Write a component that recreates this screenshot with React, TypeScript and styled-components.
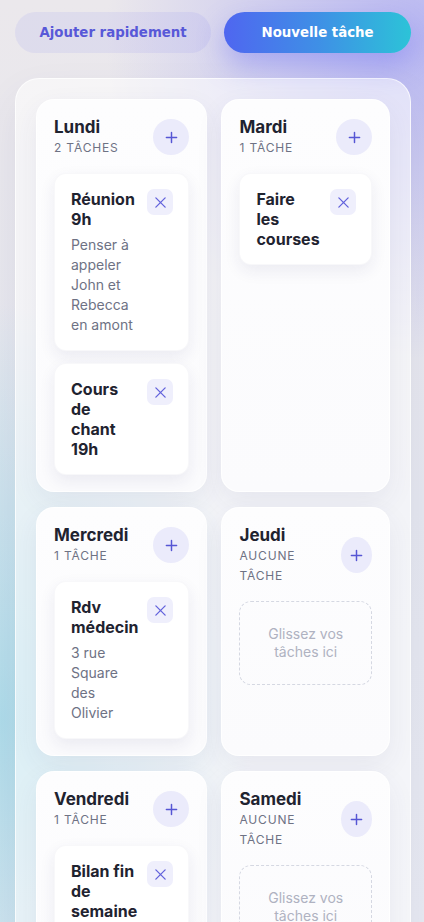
import styled, { createGlobalStyle } from "styled-components";

type Task = { id: number; title: string; note?: string };
type Day = { name: string; tasks: Task[] };

const days: Day[] = [
  {
    name: "Lundi",
    tasks: [
      { id: 1, title: "Réunion 9h", note: "Penser à appeler John et Rebecca en amont" },
      { id: 2, title: "Cours de chant 19h" },
    ],
  },
  { name: "Mardi", tasks: [{ id: 3, title: "Faire les courses" }] },
  { name: "Mercredi", tasks: [{ id: 4, title: "Rdv médecin", note: "3 rue Square des Olivier" }] },
  { name: "Jeudi", tasks: [] },
  { name: "Vendredi", tasks: [{ id: 5, title: "Bilan fin de semaine" }] },
  { name: "Samedi", tasks: [] },
  { name: "Dimanche", tasks: [] },
];

const GlobalStyle = createGlobalStyle`
  * {
    box-sizing: border-box;
  }

  body {
    margin: 0;
    min-height: 100vh;
    font-family: Inter, "Noto Sans", sans-serif;
    color: #1f2330;
    background:
      radial-gradient(ellipse 75% 35% at 100% 4%, rgba(150, 150, 245, 0.6), transparent 100%),
      radial-gradient(ellipse 60% 45% at 0% 78%, rgba(150, 214, 230, 0.7), transparent 100%),
      linear-gradient(180deg, #ebe8ec 0%, #e5e7ef 55%, #e8eaf2 100%);
    background-attachment: fixed;
  }
`;

const Page = styled.div`
  padding: 12px 13px 24px 15px;
`;

const Toolbar = styled.div`
  display: grid;
  grid-template-columns: 1.05fr 1fr;
  gap: 13px;
`;

const PillButton = styled.button`
  height: 41px;
  border: none;
  border-radius: 999px;
  font-family: "DejaVu Sans", sans-serif;
  font-size: 13.33px;
  font-weight: 700;
  cursor: pointer;
`;

const QuickButton = styled(PillButton)`
  color: #5858d8;
  background: rgba(99, 102, 241, 0.09);
`;

const NewButton = styled(PillButton)`
  color: #ffffff;
  background: linear-gradient(90deg, #4f66f0 0%, #3f8fe6 50%, #2cc3d8 100%);
  box-shadow: 0 12px 28px rgba(99, 102, 241, 0.38);
`;

const Board = styled.main`
  margin-top: 25px;
  padding: 20px;
  border-radius: 24px;
  background: rgba(255, 255, 255, 0.55);
  border: 1px solid rgba(255, 255, 255, 0.75);
  box-shadow: 0 18px 40px rgba(70, 70, 130, 0.08);
`;

const DaysGrid = styled.div`
  display: grid;
  grid-template-columns: 1fr 1fr;
  column-gap: 14px;
  row-gap: 15px;
`;

const Column = styled.section`
  display: flex;
  flex-direction: column;
  gap: 15px;
  padding: 16px 17px;
  border-radius: 18px;
  background: linear-gradient(180deg, #fdfdfe 0%, #fbfbfd 100%);
  border: 1px solid rgba(255, 255, 255, 0.9);
  box-shadow: 0 10px 28px rgba(60, 60, 120, 0.07);
`;

const ColumnHeader = styled.header`
  display: flex;
  align-items: center;
  justify-content: space-between;
  gap: 12px;
`;

const DayTitle = styled.h2`
  margin: 0;
  font-size: 17px;
  line-height: 22px;
  font-weight: 700;
  color: #1f2330;
`;

const Count = styled.div`
  font-size: 12px;
  line-height: 20px;
  letter-spacing: 0.07em;
  text-transform: uppercase;
  color: #6e7284;
`;

const AddButton = styled.button`
  width: 36px;
  height: 36px;
  padding: 0;
  border: none;
  border-radius: 50%;
  background: #ebebfb;
  color: #5656d4;
  display: flex;
  align-items: center;
  justify-content: center;
  cursor: pointer;
`;

const TaskList = styled.div`
  display: flex;
  flex-direction: column;
  gap: 12px;
`;

const TaskCard = styled.article`
  display: flex;
  align-items: flex-start;
  gap: 9px;
  padding: 15px 15px 15px 16px;
  border-radius: 12px;
  background: #ffffff;
  border: 1px solid rgba(30, 30, 80, 0.03);
  box-shadow: 0 6px 16px rgba(40, 40, 100, 0.08);
`;

const TaskBody = styled.div`
  flex: 1;
  min-width: 0;
`;

const TaskTitle = styled.h3`
  margin: 0;
  font-size: 16px;
  line-height: 20px;
  font-weight: 700;
  color: #1f2330;
`;

const TaskNote = styled.p`
  margin: 6px 0 0;
  font-size: 14px;
  line-height: 20px;
  color: #6e7284;
`;

const RemoveButton = styled.button`
  flex-shrink: 0;
  width: 26px;
  height: 26px;
  padding: 0;
  border: none;
  border-radius: 7px;
  background: #efeffc;
  color: #6262dc;
  display: flex;
  align-items: center;
  justify-content: center;
  cursor: pointer;
`;

const DropZone = styled.div`
  height: 84px;
  padding: 0 16px;
  display: flex;
  align-items: center;
  justify-content: center;
  text-align: center;
  border: 1px dashed #d5d8e2;
  border-radius: 12px;
  font-size: 14px;
  line-height: 18px;
  color: #afb2c1;
`;

function PlusIcon() {
  return (
    <svg width="13" height="13" viewBox="0 0 14 14" fill="none">
      <path d="M7 1.5v11M1.5 7h11" stroke="currentColor" strokeWidth="1.6" strokeLinecap="round" />
    </svg>
  );
}

function CrossIcon() {
  return (
    <svg width="13" height="13" viewBox="0 0 14 14" fill="none">
      <path d="M2 2l10 10M12 2L2 12" stroke="currentColor" strokeWidth="1.4" strokeLinecap="round" />
    </svg>
  );
}

function countLabel(n: number) {
  if (n === 0) return "Aucune tâche";
  return n === 1 ? "1 tâche" : `${n} tâches`;
}

function DayColumn({ day }: { day: Day }) {
  return (
    <Column>
      <ColumnHeader>
        <div>
          <DayTitle>{day.name}</DayTitle>
          <Count>{countLabel(day.tasks.length)}</Count>
        </div>
        <AddButton aria-label={`Ajouter à ${day.name}`}>
          <PlusIcon />
        </AddButton>
      </ColumnHeader>
      {day.tasks.length === 0 ? (
        <DropZone>Glissez vos tâches ici</DropZone>
      ) : (
        <TaskList>
          {day.tasks.map((task) => (
            <TaskCard key={task.id}>
              <TaskBody>
                <TaskTitle>{task.title}</TaskTitle>
                {task.note && <TaskNote>{task.note}</TaskNote>}
              </TaskBody>
              <RemoveButton aria-label="Supprimer">
                <CrossIcon />
              </RemoveButton>
            </TaskCard>
          ))}
        </TaskList>
      )}
    </Column>
  );
}

export default function App() {
  return (
    <>
      <GlobalStyle />
      <Page>
        <Toolbar>
          <QuickButton>Ajouter rapidement</QuickButton>
          <NewButton>Nouvelle tâche</NewButton>
        </Toolbar>
        <Board>
          <DaysGrid>
            {days.map((day) => (
              <DayColumn key={day.name} day={day} />
            ))}
          </DaysGrid>
        </Board>
      </Page>
    </>
  );
}
